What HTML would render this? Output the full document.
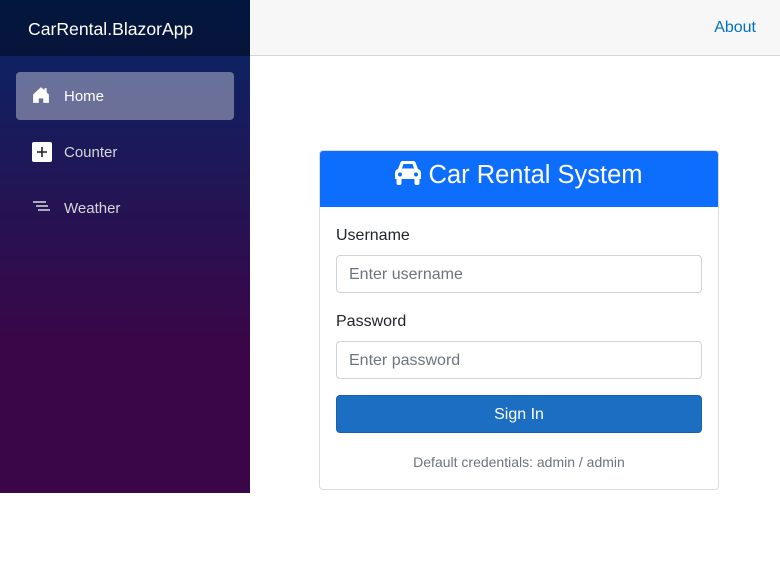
<!DOCTYPE html>
<html><head><style>
*{box-sizing:border-box}
body{margin:0;width:780px;height:567px;font-family:"Liberation Sans",sans-serif;background:#fff;position:relative;overflow:hidden}
.side{position:absolute;left:0;top:0;width:250px;height:493px;background:linear-gradient(180deg,#052767 0%,#3a0647 70%)}
.brand{height:56px;background:rgba(0,0,0,.4);color:#fff;font-size:17.6px;line-height:58px;padding-left:28px}
.nav{position:absolute;left:16px;width:218px;height:48px;border-radius:4px;color:#d7d7d7;font-size:15px;line-height:50px;padding-left:48px}
.nav.active{background:rgba(255,255,255,.37);color:#fff}
.nav svg{position:absolute;left:16px;top:14px}
.top{position:absolute;left:250px;top:0;right:0;height:56px;background:#f7f7f7;border-bottom:1px solid #d6d5d5}
.top a{position:absolute;right:24px;top:19px;color:#0071c1;font-size:16px;text-decoration:none}
.card{position:absolute;left:319px;top:150px;width:400px;height:340px;border:1px solid #dcdcdc;border-radius:4px;overflow:hidden}
.hd{height:56px;background:#0d6efd;color:#fff;font-size:25.5px;text-align:center;line-height:48px}
.lbl{position:absolute;left:16px;font-size:16px;color:#212529}
.inp{position:absolute;left:16px;width:366px;height:38px;border:1px solid #ced4da;border-radius:4px;font-size:16px;color:#6c757d;line-height:37px;padding-left:12px}
.btn{position:absolute;left:16px;top:244px;width:366px;height:38px;background:#1b6ec2;border:1px solid #1861ac;border-radius:4px;color:#fff;font-size:16px;text-align:center;line-height:37px}
.note{position:absolute;left:0;right:0;top:303px;text-align:center;color:#6c757d;font-size:14px}
</style></head><body>
<div class="side">
<div class="brand">CarRental.BlazorApp</div>
<div class="nav active" style="top:72px"><svg width="18" height="18" viewBox="0 0 16 16" fill="#fff"><path d="M8 1L1 7.5V15h5v-4h4v4h5V7.5L13 5.5V2h-2v1.7z"/></svg>Home</div>
<div class="nav" style="top:128px"><svg width="20" height="20" viewBox="0 0 20 20"><rect width="20" height="20" rx="2" fill="#fff"/><path d="M10 5v10M5 10h10" stroke="#222" stroke-width="1.6"/></svg>Counter</div>
<div class="nav" style="top:184px"><svg width="20" height="20" viewBox="0 0 20 20" stroke="#fff" stroke-width="1.3"><path d="M1 4h13M4 8h12M6 12h12"/></svg>Weather</div>
</div>
<div class="top"><a>About</a></div>
<div class="card">
<div class="hd"><svg width="26" height="24" viewBox="0 0 26 24" style="vertical-align:-2px" fill="#fff"><path fill-rule="evenodd" d="M5.5 1.5Q6 0 8 0h10q2 0 2.5 1.5L23 8q3 1 3 4v6h-1.5v4q0 2-2 2h-1q-2 0-2-2v-4H6.5v4q0 2-2 2h-1q-2 0-2-2v-4H0v-6q0-3 3-4zM8.5 3L7 7.5h12L17.5 3zM5 11.5a2 2 0 100 4 2 2 0 000-4zm16 0a2 2 0 100 4 2 2 0 000-4z"/></svg> Car Rental System</div>
<div class="lbl" style="top:76px">Username</div>
<div class="inp" style="top:104px">Enter username</div>
<div class="lbl" style="top:162px">Password</div>
<div class="inp" style="top:190px">Enter password</div>
<div class="btn">Sign In</div>
<div class="note">Default credentials: admin / admin</div>
</div>
</body></html>
